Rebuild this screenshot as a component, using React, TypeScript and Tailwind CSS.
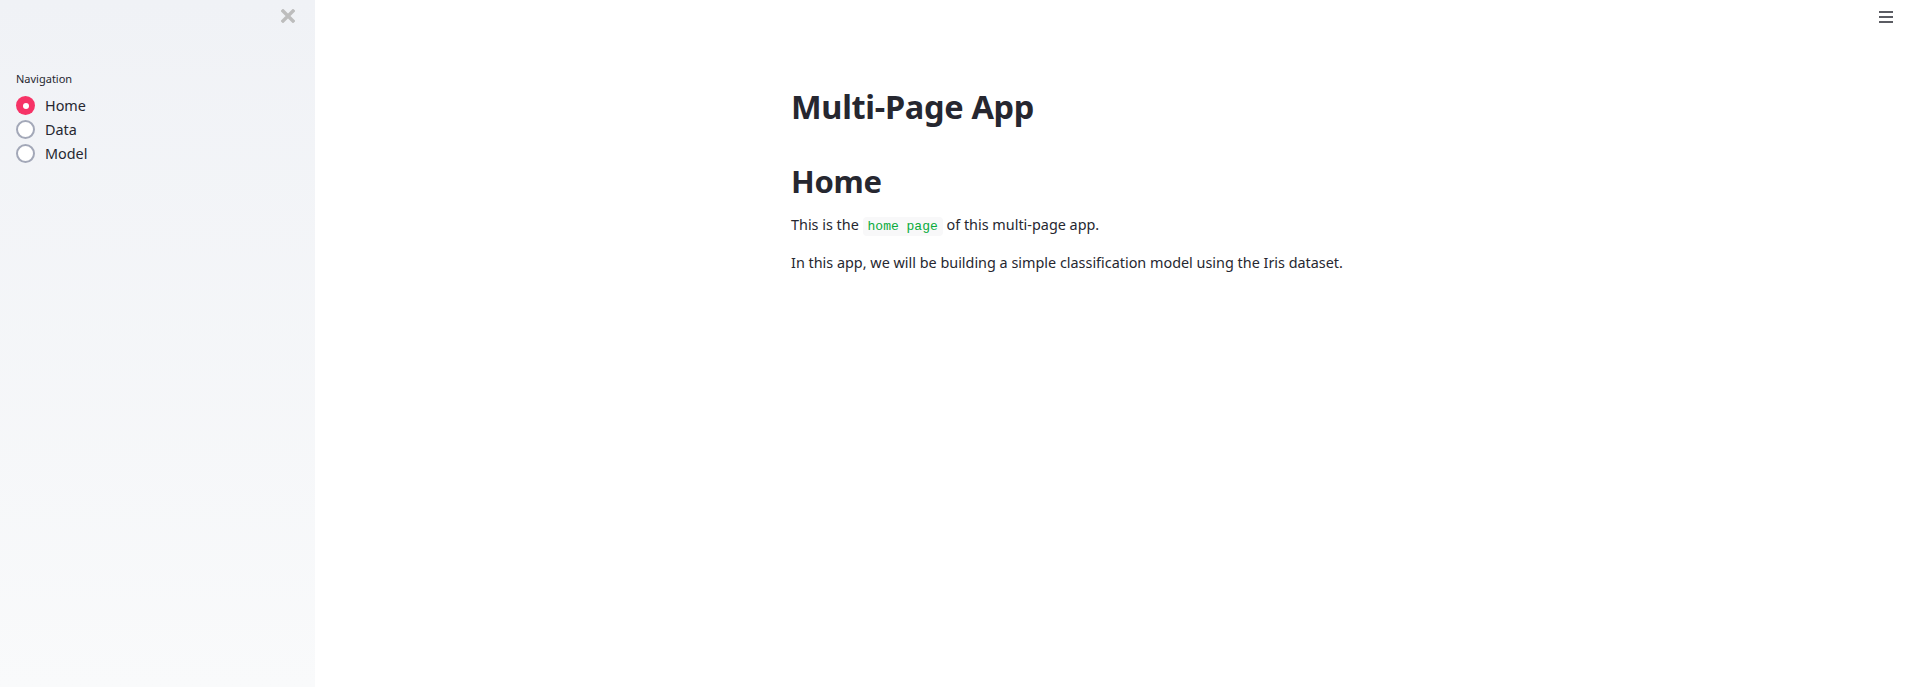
import { useState } from "react";

const pages = ["Home", "Data", "Model"];

const Radio = ({ label, checked, onClick }: { label: string; checked: boolean; onClick: () => void }) => {
  return (
    <button onClick={onClick} className="flex items-center gap-[10px] h-[24px] text-left">
      {checked ? (
        <span className="w-[19px] h-[19px] rounded-full bg-[#f63366] flex items-center justify-center">
          <span className="w-[6px] h-[6px] rounded-full bg-white" />
        </span>
      ) : (
        <span className="w-[19px] h-[19px] rounded-full border-2 border-[#a3a8b8] bg-white" />
      )}
      <span className="text-[14.4px] text-[#262730]">{label}</span>
    </button>
  );
};

const App = () => {
  const [page, setPage] = useState("Home");

  return (
    <div className="flex w-full h-[687px] bg-white text-[#262730]" style={{ fontFamily: '"Noto Sans", "Open Sans", sans-serif' }}>
      {/* sidebar */}
      <aside className="w-[315px] shrink-0 bg-gradient-to-b from-[#f0f2f6] to-[#f9fafb] flex flex-col">
        <div className="flex justify-end pt-[9px] pr-[20px]">
          <svg width="14" height="14" viewBox="0 0 14 14">
            <path d="M2 2 L12 12 M12 2 L2 12" stroke="#bdbdbd" strokeWidth="3.4" strokeLinecap="square" />
          </svg>
        </div>
        <div className="px-[16px] pt-[48px]">
          <div className="text-[11px] text-[#262730] mb-[6px]">Navigation</div>
          <div className="flex flex-col">
            {pages.map((p) => (
              <Radio key={p} label={p} checked={page === p} onClick={() => setPage(p)} />
            ))}
          </div>
        </div>
      </aside>

      {/* main */}
      <main className="flex-1 flex flex-col">
        <div className="flex justify-end pt-[11px] pr-[22px] h-[30px]">
          <svg width="14" height="12" viewBox="0 0 14 12">
            <path d="M0 1 H14 M0 6 H14 M0 11 H14" stroke="#262730" strokeWidth="1.6" />
          </svg>
        </div>
        <div className="w-[648px] mx-auto pt-[55px]">
          <h1 className="text-[32.5px] font-bold leading-[44px] tracking-[-0.3px]">Multi-Page App</h1>
          <h2 className="text-[31px] font-bold leading-[44px] mt-[30px] tracking-[-0.3px]">{page}</h2>
          <p className="text-[14.4px] leading-[24px] mt-[10px]">
            This is the{" "}
            <code className="px-[5px] py-[2px] rounded bg-[#f8f8f9] text-[#09ab3b] text-[13px]" style={{ fontFamily: '"Liberation Mono", monospace' }}>
              home page
            </code>{" "}
            of this multi-page app.
          </p>
          <p className="text-[14.4px] leading-[24px] mt-[12px]">
            In this app, we will be building a simple classification model using the Iris dataset.
          </p>
        </div>
      </main>
    </div>
  );
};

export default App;
